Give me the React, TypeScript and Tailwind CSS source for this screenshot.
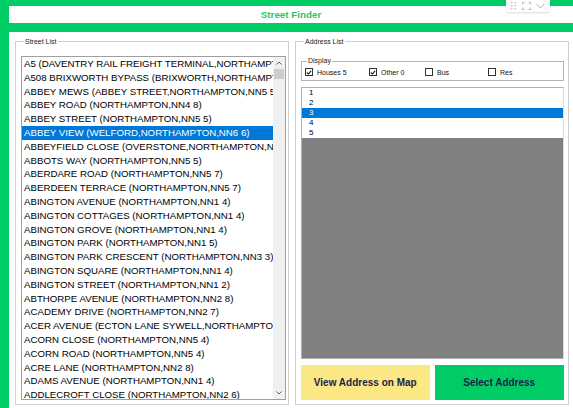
import React from "react";

const streets = [
  "A5 (DAVENTRY RAIL FREIGHT TERMINAL,NORTHAMPTON,NN6 7)",
  "A508 BRIXWORTH BYPASS (BRIXWORTH,NORTHAMPTON,NN6 9)",
  "ABBEY MEWS (ABBEY STREET,NORTHAMPTON,NN5 5)",
  "ABBEY ROAD (NORTHAMPTON,NN4 8)",
  "ABBEY STREET (NORTHAMPTON,NN5 5)",
  "ABBEY VIEW (WELFORD,NORTHAMPTON,NN6 6)",
  "ABBEYFIELD CLOSE (OVERSTONE,NORTHAMPTON,NN6 0)",
  "ABBOTS WAY (NORTHAMPTON,NN5 5)",
  "ABERDARE ROAD (NORTHAMPTON,NN5 7)",
  "ABERDEEN TERRACE (NORTHAMPTON,NN5 7)",
  "ABINGTON AVENUE (NORTHAMPTON,NN1 4)",
  "ABINGTON COTTAGES (NORTHAMPTON,NN1 4)",
  "ABINGTON GROVE (NORTHAMPTON,NN1 4)",
  "ABINGTON PARK (NORTHAMPTON,NN1 5)",
  "ABINGTON PARK CRESCENT (NORTHAMPTON,NN3 3)",
  "ABINGTON SQUARE (NORTHAMPTON,NN1 4)",
  "ABINGTON STREET (NORTHAMPTON,NN1 2)",
  "ABTHORPE AVENUE (NORTHAMPTON,NN2 8)",
  "ACADEMY DRIVE (NORTHAMPTON,NN2 7)",
  "ACER AVENUE (ECTON LANE SYWELL,NORTHAMPTON,NN6 0)",
  "ACORN CLOSE (NORTHAMPTON,NN5 4)",
  "ACORN ROAD (NORTHAMPTON,NN5 4)",
  "ACRE LANE (NORTHAMPTON,NN2 8)",
  "ADAMS AVENUE (NORTHAMPTON,NN1 4)",
  "ADDLECROFT CLOSE (NORTHAMPTON,NN2 6)",
];

function Check({ checked, label, w }: { checked: boolean; label: string; w: string }) {
  return (
    <div className={`flex items-center gap-[4px] ${w}`}>
      <span className="w-[8px] h-[8px] border border-[#333] bg-white flex items-center justify-center">
        {checked && (
          <svg width="7" height="7" viewBox="0 0 7 7">
            <path d="M1 3.5 L2.8 5.3 L6 1.5" stroke="#111" strokeWidth="1.3" fill="none" />
          </svg>
        )}
      </span>
      <span className="text-[7px] leading-none text-[#111]">{label}</span>
    </div>
  );
}

export default function App() {
  return (
    <div
      className="relative w-[573px] h-[408px] bg-[#00cc66] flex flex-col pl-[9px] pt-[6px] overflow-hidden"
      style={{ fontFamily: '"Liberation Sans", Arial, sans-serif' }}
    >
      {/* title bar */}
      <div className="h-[17px] bg-white flex items-center justify-center">
        <span className="text-[9.8px] font-bold text-[#1fc868] leading-none">Street Finder</span>
      </div>

      {/* content */}
      <div className="mt-[9px] flex-1 bg-white flex gap-[6px] pl-[6px] pr-[4px] pt-[5px]">
        {/* Street list group */}
        <fieldset className="w-[274px] min-w-0 shrink-0 h-[368px] border border-[#cfcfcf] pl-[5px] pr-[2px]">
          <legend className="text-[7px] leading-[9px] text-[#222] ml-[3px] px-[1px]">Street List</legend>
          <div className="mt-[10px] h-[344px] border border-[#a0a0a0] flex bg-white">
            <div className="flex-1 min-w-0 overflow-hidden">
              {streets.map((s, i) => (
                <div
                  key={i}
                  className={`h-[13.8px] leading-[13.8px] whitespace-nowrap overflow-hidden text-[9.7px] pl-[2px] ${
                    i === 5 ? "bg-[#0078d7] text-white" : "text-black"
                  }`}
                >
                  {s}
                </div>
              ))}
            </div>
            <div className="w-[12px] shrink-0 bg-[#f0f0f0] flex flex-col items-center">
              <div className="h-[12px] flex items-center justify-center">
                <svg width="6" height="4" viewBox="0 0 6 4">
                  <path d="M0.5 3.5 L3 1 L5.5 3.5" stroke="#606060" strokeWidth="1" fill="none" />
                </svg>
              </div>
              <div className="w-[10px] h-[10px] bg-[#cdcdcd]" />
              <div className="flex-1" />
              <div className="h-[12px] flex items-center justify-center">
                <svg width="6" height="4" viewBox="0 0 6 4">
                  <path d="M0.5 0.5 L3 3 L5.5 0.5" stroke="#606060" strokeWidth="1" fill="none" />
                </svg>
              </div>
            </div>
          </div>
        </fieldset>

        {/* Address list group */}
        <fieldset className="w-[274px] min-w-0 shrink-0 h-[368px] border border-[#cfcfcf] pl-[5px] pr-[4px]">
          <legend className="text-[7px] leading-[9px] text-[#222] ml-[3px] px-[1px]">Address List</legend>
          <fieldset className="mt-[11px] min-w-0 border border-[#b5b5b5] pl-[3px] pb-[2px]">
            <legend className="text-[7px] leading-[8px] text-[#222] ml-[2px] px-[1px]">Display</legend>
            <div className="h-[13px] pt-[1px] flex items-center">
              <Check checked label="Houses 5" w="w-[64px]" />
              <Check checked label="Other 0" w="w-[56px]" />
              <Check checked={false} label="Bus" w="w-[63px]" />
              <Check checked={false} label="Res" w="w-[60px]" />
            </div>
          </fieldset>
          <div className="mt-[6px] h-[272px] border border-[#b0b0b0] border-r-[#dcdcdc] flex flex-col bg-[#808080]">
            {["1", "2", "3", "4", "5"].map((n) => (
              <div
                key={n}
                className={`h-[10px] leading-[10px] text-[8px] pl-[7px] ${
                  n === "3" ? "bg-[#0078d7] text-white" : "bg-white text-black"
                }`}
              >
                {n}
              </div>
            ))}
          </div>
          <div className="mt-[6px] h-[35px] flex gap-[5px]">
            <button className="w-[129px] h-full bg-[#fbe784] text-[10px] font-bold text-[#22224a]">
              View Address on Map
            </button>
            <button className="w-[130px] h-full bg-[#00cc66] text-[10px] font-bold text-[#1a1f4a]">
              Select Address
            </button>
          </div>
        </fieldset>
      </div>

      {/* visual header overlay */}
      <div className="absolute top-0 left-[506px] w-[44px] h-[12px] bg-white rounded-b-[2px] shadow-[0_1px_2px_rgba(0,0,0,0.15)] flex items-center justify-around px-[2px]">
        <svg width="6" height="8" viewBox="0 0 6 8">
          {[0, 1, 2].map((r) =>
            [0, 1].map((c) => <rect key={`${r}${c}`} x={c * 3.5} y={r * 3} width="1.5" height="1.5" fill="#c4c4c4" />)
          )}
        </svg>
        <svg width="9" height="8" viewBox="0 0 9 8">
          <path d="M0.5 2.5 V0.5 H2.5 M6.5 0.5 H8.5 V2.5 M8.5 5.5 V7.5 H6.5 M2.5 7.5 H0.5 V5.5" stroke="#b5b5b5" strokeWidth="1" fill="none" />
        </svg>
        <svg width="9" height="6" viewBox="0 0 9 6">
          <path d="M0.5 1 L4.5 5 L8.5 1" stroke="#a8a8a8" strokeWidth="1" fill="none" />
        </svg>
      </div>
    </div>
  );
}
